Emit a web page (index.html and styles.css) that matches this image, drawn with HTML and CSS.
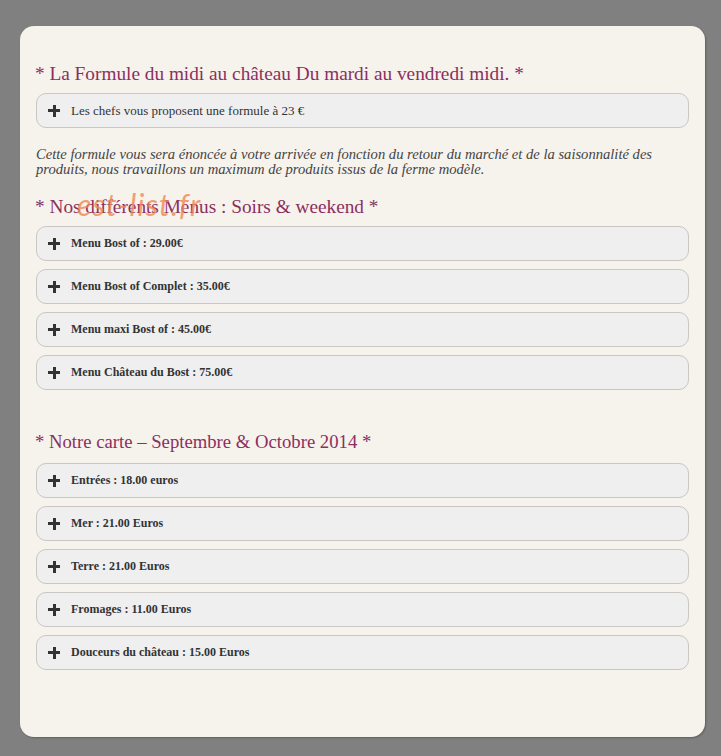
FILE: index.html
```html
<!DOCTYPE html>
<html lang="fr">
<head>
    <meta charset="UTF-8">
    <meta name="viewport" content="width=device-width, initial-scale=1.0">
    <title>Menus - Château du Bost</title>
    <link rel="stylesheet" href="styles.css">
</head>
<body>
    <div class="page">
        <h2 class="section-title">* La Formule du midi au château Du mardi au vendredi midi. *</h2>
        <div class="accordion">
            <div class="acc-item"><span class="plus"></span><span class="acc-label light">Les chefs vous proposent une formule à 23 €</span></div>
        </div>

        <p class="intro">Cette formule vous sera énoncée à votre arrivée en fonction du retour du marché et de la saisonnalité des produits, nous travaillons un maximum de produits issus de la ferme modèle.</p>

        <div class="title-wrap">
            <h2 class="section-title">* Nos différents Menus : Soirs &amp; weekend *</h2>
            <span class="stamp">est-list.fr</span>
        </div>
        <div class="accordion">
            <div class="acc-item"><span class="plus"></span><span class="acc-label">Menu Bost of : 29.00€</span></div>
            <div class="acc-item"><span class="plus"></span><span class="acc-label">Menu Bost of Complet : 35.00€</span></div>
            <div class="acc-item"><span class="plus"></span><span class="acc-label">Menu maxi Bost of : 45.00€</span></div>
            <div class="acc-item"><span class="plus"></span><span class="acc-label">Menu Château du Bost : 75.00€</span></div>
        </div>

        <h2 class="section-title carte">* Notre carte – Septembre &amp; Octobre 2014 *</h2>
        <div class="accordion">
            <div class="acc-item"><span class="plus"></span><span class="acc-label">Entrées : 18.00 euros</span></div>
            <div class="acc-item"><span class="plus"></span><span class="acc-label">Mer : 21.00 Euros</span></div>
            <div class="acc-item"><span class="plus"></span><span class="acc-label">Terre : 21.00 Euros</span></div>
            <div class="acc-item"><span class="plus"></span><span class="acc-label">Fromages : 11.00 Euros</span></div>
            <div class="acc-item"><span class="plus"></span><span class="acc-label">Douceurs du château : 15.00 Euros</span></div>
        </div>
    </div>
</body>
</html>
```

FILE: styles.css
```css
body {
    margin: 0;
    padding: 26px 16px 19px 20px;
    background: #808080;
    font-family: "Liberation Serif", serif;
}

.page {
    background: #f6f2ec;
    border-radius: 14px;
    box-shadow: 1px 1px 2px rgba(0, 0, 0, 0.25);
    padding: 36px 16px 60px 15px;
    min-height: 615px;
}

.section-title {
    margin: 0 0 7px 0;
    font-size: 19.3px;
    font-weight: normal;
    color: #8b2f5f;
    line-height: 24px;
}

.section-title.carte {
    margin: 40px 0 9px 0;
    font-size: 18.7px;
}

.accordion {
    display: flex;
    flex-direction: column;
    gap: 8px;
    margin-left: 1px;
}

.acc-item {
    height: 33px;
    display: flex;
    align-items: center;
    background: #efefef;
    border: 1px solid #c9c6c3;
    border-radius: 10px;
    padding-left: 11px;
}

.plus {
    width: 12px;
    height: 12px;
    margin-right: 11px;
    background:
        linear-gradient(#333, #333) center / 12px 3px no-repeat,
        linear-gradient(#333, #333) center / 3px 12px no-repeat;
}

.acc-label {
    font-size: 12px;
    font-weight: bold;
    color: #333;
}

.acc-label.light {
    font-size: 13px;
    font-weight: normal;
}

.intro {
    margin: 19px 0 18px 1px;
    font-size: 14.6px;
    font-style: italic;
    line-height: 15px;
    color: #444;
}

.title-wrap {
    position: relative;
}

/* tampon du site, posé en travers du titre */
.stamp {
    position: absolute;
    left: 42px;
    top: -9px;
    font-family: Lato, sans-serif;
    font-size: 30px;
    font-style: italic;
    letter-spacing: 1.3px;
    color: rgba(238, 135, 80, 0.8);
    pointer-events: none;
}
```
